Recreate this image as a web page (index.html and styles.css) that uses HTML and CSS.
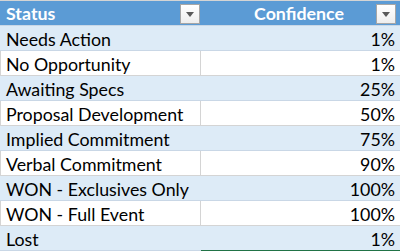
FILE: index.html
```html
<!DOCTYPE html>
<html>
<head>
<meta charset="utf-8">
<link rel="stylesheet" href="styles.css">
</head>
<body>
<div class="sheet">
  <div class="row head">
    <div class="cell c1"><span class="htext">Status</span><span class="dd"><svg width="8" height="5" viewBox="0 0 8 5"><path d="M0 0H8L4 5Z" fill="#595959"/></svg></span></div>
    <div class="cell c2"><span class="htext center">Confidence</span><span class="dd"><svg width="8" height="5" viewBox="0 0 8 5"><path d="M0 0H8L4 5Z" fill="#595959"/></svg></span></div>
  </div>
  <div class="row band"><div class="cell c1">Needs Action</div><div class="cell c2 num">1%</div></div>
  <div class="row"><div class="cell c1">No Opportunity</div><div class="cell c2 num">1%</div></div>
  <div class="row band"><div class="cell c1">Awaiting Specs</div><div class="cell c2 num">25%</div></div>
  <div class="row"><div class="cell c1">Proposal Development</div><div class="cell c2 num">50%</div></div>
  <div class="row band"><div class="cell c1">Implied Commitment</div><div class="cell c2 num">75%</div></div>
  <div class="row"><div class="cell c1">Verbal Commitment</div><div class="cell c2 num">90%</div></div>
  <div class="row band"><div class="cell c1">WON - Exclusives Only</div><div class="cell c2 num">100%</div></div>
  <div class="row"><div class="cell c1">WON - Full Event</div><div class="cell c2 num">100%</div></div>
  <div class="row band"><div class="cell c1">Lost</div><div class="cell c2 num">1%</div></div>
  <div class="row next"><div class="cell c1"></div><div class="cell c2 sel"></div></div>
</div>
</body>
</html>
```
FILE: styles.css
```css
html, body {
  margin: 0;
  padding: 0;
  background: #ffffff;
}
.sheet {
  width: 400px;
  height: 251px;
  overflow: hidden;
  border-top: 1px solid #d4d4d4;
  font-family: Lato, "Open Sans", sans-serif;
  font-size: 17.8px;
  color: #000;
}
.row {
  display: grid;
  grid-template-columns: 201px 199px;
  height: 24px;
  border-bottom: 1px solid #d4d4d4;
  background: #ffffff;
}
.row .c1 {
  border-left: 1px solid #d4d4d4;
  border-right: 1px solid #d4d4d4;
}
.row.band {
  background: #ddebf7;
  border-bottom-color: #c9d7e6;
}
.row.band .c1 {
  border-left-color: #ddebf7;
  border-right-color: #ddebf7;
}
.row.head {
  background: #5b9bd5;
  border-bottom-color: #c9d7e6;
}
.row.head .c1 {
  border-left-color: #5b9bd5;
  border-right-color: #5b9bd5;
}
.cell {
  display: flex;
  align-items: center;
  padding: 2px 5px 0 5px;
  white-space: nowrap;
  line-height: 22px;
  box-sizing: border-box;
}
.num {
  justify-content: flex-end;
}
.head .cell {
  color: #ffffff;
  font-weight: bold;
  justify-content: space-between;
  padding-right: 0;
  padding-top: 0;
  line-height: 24px;
}
.head .c2 {
  padding-right: 4px;
  padding-left: 0;
}
.htext.center {
  flex: 1;
  text-align: center;
  padding-left: 21px;
}
.dd {
  width: 20px;
  height: 20px;
  box-sizing: border-box;
  border: 1px solid #a6a6a6;
  background: linear-gradient(#ffffff, #eeeeee);
  display: flex;
  align-items: center;
  justify-content: center;
  margin-top: 2px;
}
.row.next {
  border-bottom: none;
}
.sel {
  border-top: 2px solid #217346;
  margin-top: -1px;
}
```
